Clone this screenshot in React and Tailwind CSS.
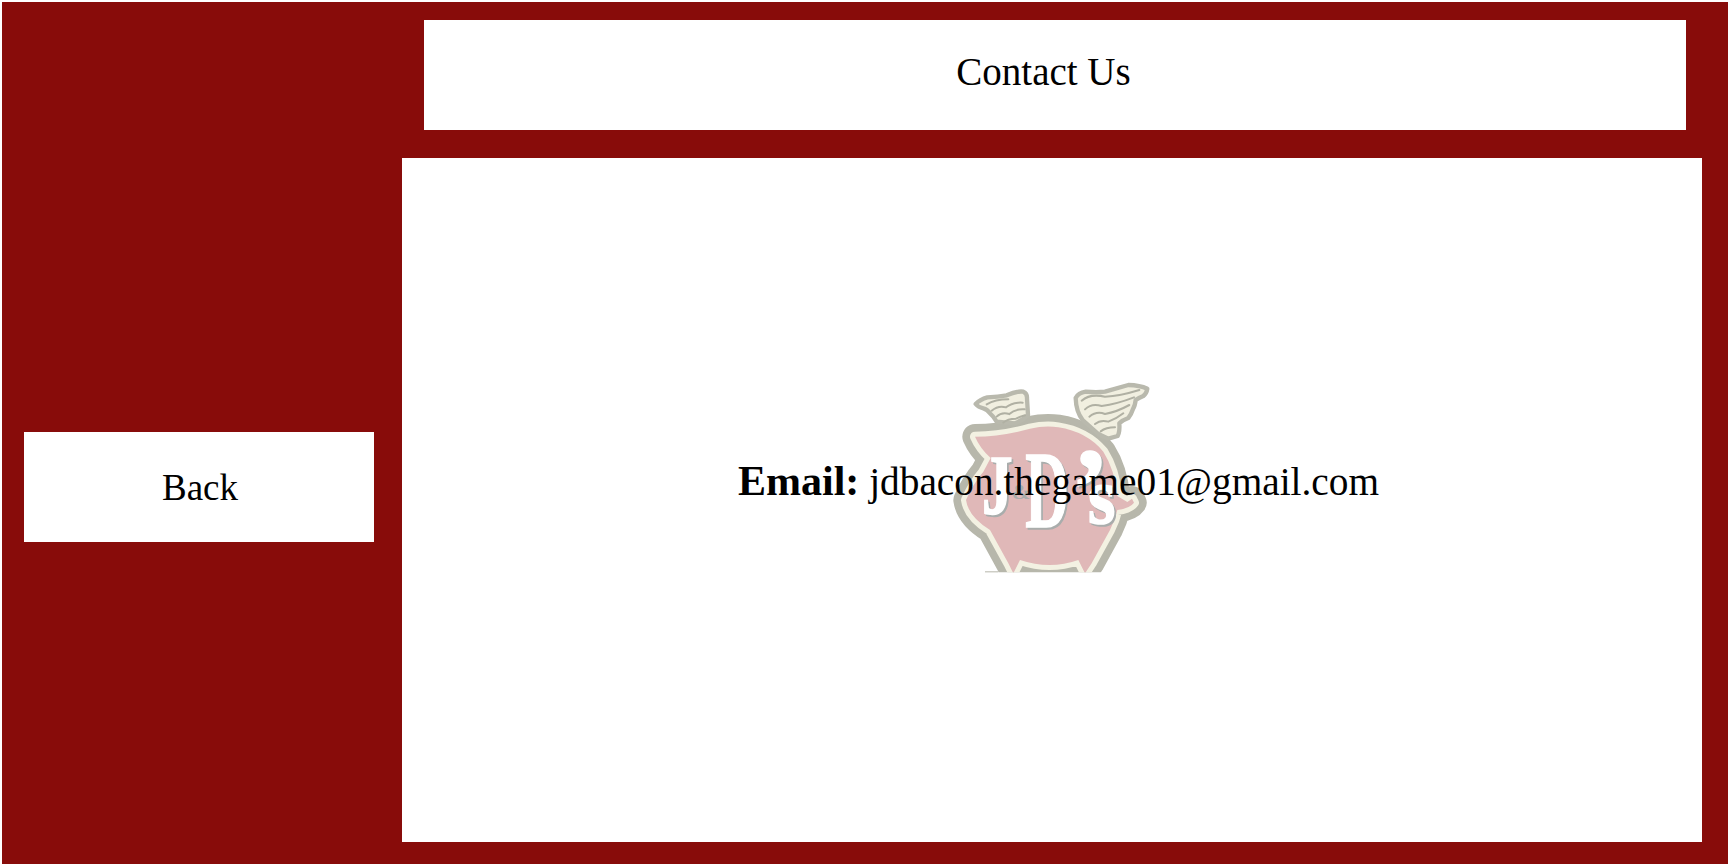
const BODY =
  "M135 200 Q215 200 300 176 Q345 166 385 172 Q470 185 520 245 Q555 300 562 378 L592 396 L606 386 L612 398 Q600 415 562 420 Q555 450 540 480 L485 580 L465 610 L445 570 Q360 600 270 570 L250 610 L235 580 L180 480 Q115 440 108 390 Q130 340 160 305 L182 264 Q150 235 135 200Z";

const serif = "'Liberation Serif', serif";

function Letter({ x, y, sx, size, children }) {
  return (
    <>
      <text transform={`translate(${x + 5} ${y + 6}) scale(${sx} 1)`} fontFamily={serif} fontWeight="700" fontSize={size} fill="#a9adac" stroke="#a9adac" strokeWidth="5">
        {children}
      </text>
      <text transform={`translate(${x} ${y}) scale(${sx} 1)`} fontFamily={serif} fontWeight="700" fontSize={size} fill="#ffffff" stroke="#ffffff" strokeWidth="5">
        {children}
      </text>
    </>
  );
}

function PigLogo() {
  return (
    <svg viewBox="0 0 690 630" className="w-[230px] h-[210px]">
      <defs>
        <clipPath id="cut">
          <rect x="0" y="0" width="690" height="607" />
        </clipPath>
      </defs>
      <g clipPath="url(#cut)">
        {/* body outline, wings sit between the grey and cream bands */}
        <path d={BODY} fill="#b7b7ab" stroke="#b7b7ab" strokeWidth="76" strokeLinejoin="round" />
        {/* left wing */}
        <path
          d="M137 102 Q150 88 172 82 Q205 80 230 76 Q262 62 280 65 Q292 70 291 85 L294 135 Q280 150 255 160 L200 155 Q190 138 180 130 Q172 118 160 115 Q145 112 137 102Z"
          fill="#f1efe0"
          stroke="#b9b9ad"
          strokeWidth="13"
          strokeLinejoin="round"
        />
        <path
          d="M170 103 Q195 88 235 88 M185 122 Q205 105 228 112 Q248 96 278 98 M200 140 Q215 125 238 132 Q255 116 284 118 M220 158 Q232 146 258 146 Q270 140 285 136"
          fill="none"
          stroke="#b0b0a3"
          strokeWidth="6"
          strokeLinecap="round"
        />
        {/* right wing */}
        <path
          d="M437 84 Q445 68 467 65 Q500 68 525 65 Q560 55 595 45 Q630 46 652 56 Q650 70 640 78 Q625 84 617 90 Q615 108 609 117 Q603 135 595 144 Q578 150 568 160 Q570 185 563 198 L535 206 L505 192 L458 150 Q438 125 437 84Z"
          fill="#f1efe0"
          stroke="#b9b9ad"
          strokeWidth="13"
          strokeLinejoin="round"
        />
        <path
          d="M455 92 Q480 70 525 80 Q570 78 628 60 M465 118 Q485 98 515 108 Q560 102 612 82 M478 140 Q500 122 525 132 Q560 126 598 105 M495 162 Q512 148 535 155 Q560 146 580 130 M512 184 Q528 172 555 172"
          fill="none"
          stroke="#b0b0a3"
          strokeWidth="6"
          strokeLinecap="round"
        />
        <path d={BODY} fill="#f3f1e2" stroke="#f3f1e2" strokeWidth="30" strokeLinejoin="round" />
        <path d={BODY} fill="#e0b8b8" />
        {/* lettering */}
        <Letter x={156} y={432} sx={0.72} size={255}>J</Letter>
        <text x="246" y="386" fontFamily={serif} fontWeight="700" fontSize="66" fill="#a9adac">&amp;</text>
        <Letter x={286} y={470} sx={0.55} size={330}>D</Letter>
        <Letter x={424} y={470} sx={1} size={340}>’</Letter>
        <Letter x={474} y={458} sx={0.88} size={240}>s</Letter>
      </g>
      <rect x="165" y="604" width="40" height="3" fill="#b7b7ab" />
    </svg>
  );
}

export default function App() {
  return (
    <div className="bg-white pl-[2px] pt-[2px] h-screen overflow-hidden font-['Liberation_Serif',serif] text-black">
      <div className="flex h-full bg-[#880c0a]">
        <aside className="w-[400px] shrink-0 pl-[22px] pt-[430px]">
          <button className="w-[350px] h-[110px] bg-white pl-[2px] text-[37px] leading-none">Back</button>
        </aside>
        <div className="flex flex-col">
          <header className="ml-[22px] mt-[18px] w-[1262px] h-[110px] bg-white flex justify-center pt-[32px] text-[39px] leading-none">
            <h1 className="pr-[23px]">Contact Us</h1>
          </header>
          <main className="relative mt-[28px] w-[1300px] h-[684px] bg-white flex justify-center pt-[300px]">
            <div className="absolute left-[528px] top-[212px]">
              <PigLogo />
            </div>
            <p className="relative text-[39.3px] leading-[46px] pl-[13px]">
              <b className="text-[42px]">Email:</b> jdbacon.thegame01@gmail.com
            </p>
          </main>
        </div>
      </div>
    </div>
  );
}
